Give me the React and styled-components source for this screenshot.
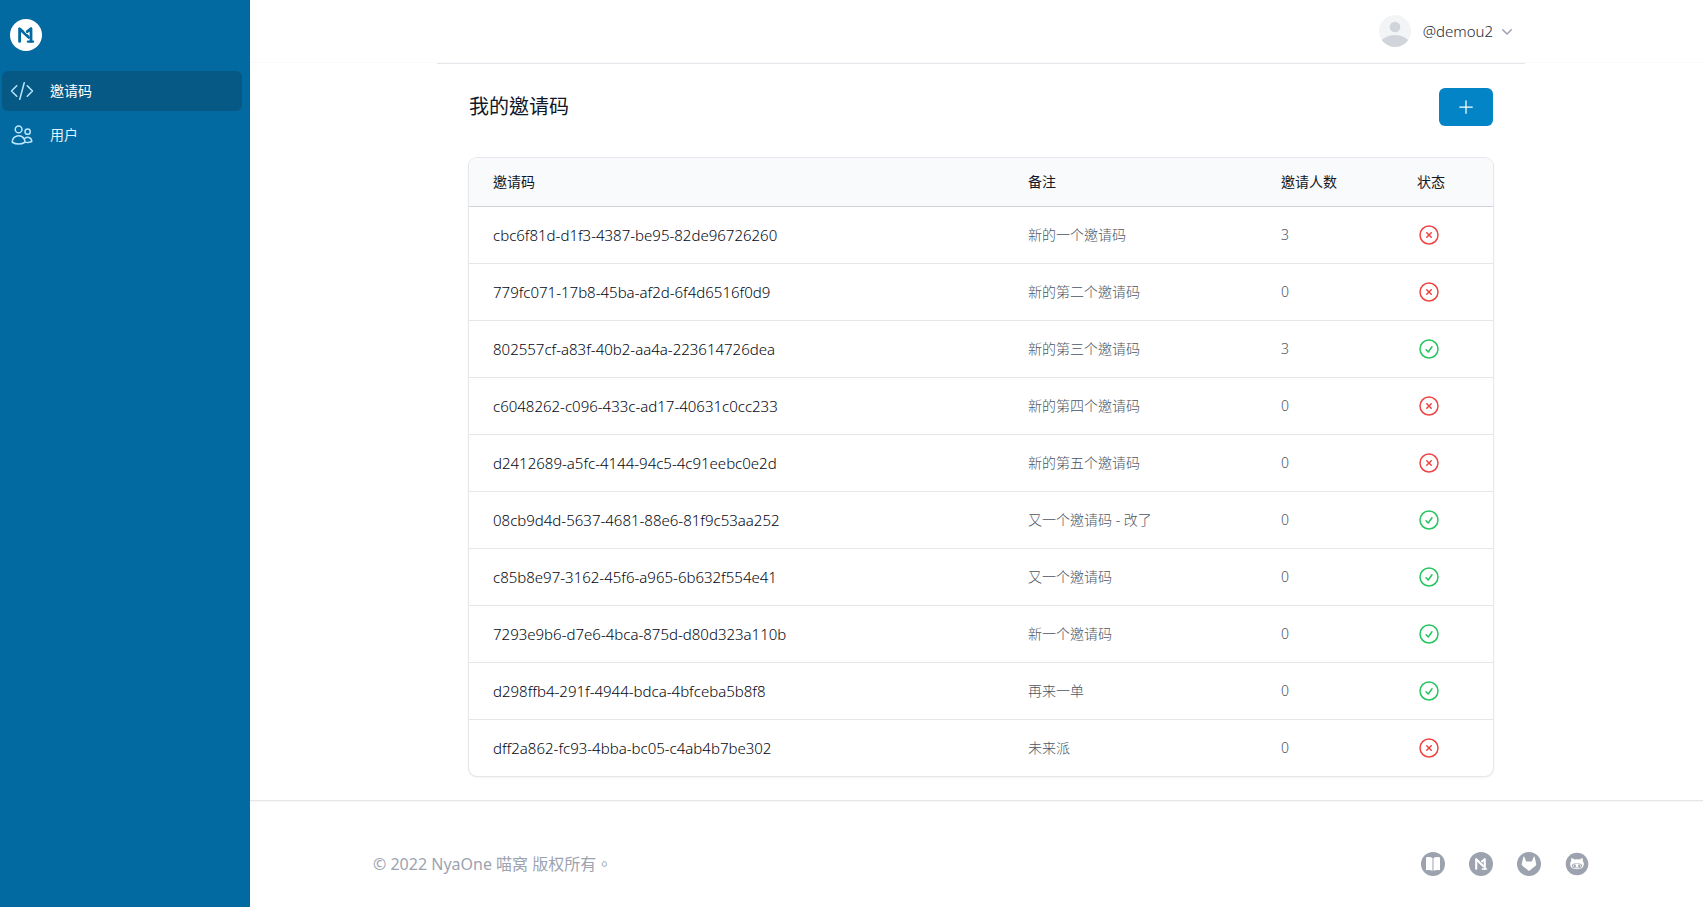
import React from "react";
import styled, { createGlobalStyle } from "styled-components";
import {
  HiOutlineCodeBracket,
  HiOutlineUsers,
  HiOutlinePlus,
  HiOutlineXCircle,
  HiOutlineCheckCircle,
  HiMiniChevronDown,
} from "react-icons/hi2";

const GlobalStyle = createGlobalStyle`
  * {
    box-sizing: border-box;
  }
  body {
    margin: 0;
    background: #ffffff;
    color: #111827;
    font-family: "Noto Sans", "Noto Sans CJK TC", "Noto Sans CJK SC", sans-serif;
    font-size: 14px;
    line-height: 20px;
  }
  button {
    font: inherit;
    cursor: pointer;
  }
`;

const Page = styled.div`
  display: flex;
  min-height: 100vh;
`;

const Sidebar = styled.aside`
  flex: 0 0 250px;
  padding: 19px 8px 16px 2px;
  background: #0369a1;
`;

const LogoLink = styled.a`
  display: block;
  width: 32px;
  height: 32px;
  margin: 0 8px 20px;
`;

const Nav = styled.nav`
  display: flex;
  flex-direction: column;
  gap: 4px;
`;

const NavLink = styled.a`
  display: flex;
  align-items: center;
  gap: 16px;
  height: 40px;
  padding: 0 8px;
  border-radius: 6px;
  background: ${(props) => (props.$active ? "#075985" : "transparent")};
  color: ${(props) => (props.$active ? "#ffffff" : "#e0f2fe")};
  text-decoration: none;

  svg {
    width: 24px;
    height: 24px;
    color: #bae6fd;
  }
`;

const Main = styled.div`
  flex: 1;
  min-width: 0;
  display: flex;
  flex-direction: column;
`;

const TopBar = styled.header`
  padding-left: 9px;
  border-bottom: 1px solid #f9fafb;
`;

const TopBarInner = styled.div`
  display: flex;
  justify-content: flex-end;
  align-items: center;
  max-width: 1088px;
  height: 62px;
  margin: 0 auto;
`;

const UserButton = styled.button`
  display: flex;
  align-items: center;
  padding: 8px;
  border: 0;
  border-radius: 6px;
  background: transparent;
  color: #1f2937;
  font-size: 15px;
  font-weight: 300;
  line-height: 20px;
`;

const Avatar = styled.span`
  width: 32px;
  height: 32px;
  margin-right: 12px;
  border-radius: 50%;
  overflow: hidden;
  background: #f3f4f6;
  color: #d1d5db;

  svg {
    display: block;
  }
`;

const Chevron = styled(HiMiniChevronDown)`
  width: 20px;
  height: 20px;
  margin-left: 4px;
  color: #9ca3af;
`;

const Content = styled.main`
  padding-left: 9px;
`;

const ContentInner = styled.div`
  max-width: 1088px;
  margin: 0 auto;
  padding: 24px 32px;
  border-top: 1px solid #e5e7eb;
`;

const Heading = styled.div`
  display: flex;
  justify-content: space-between;
  align-items: center;
  margin-bottom: 32px;
`;

const Title = styled.h1`
  margin: 0;
  font-size: 20px;
  line-height: 28px;
  font-weight: 400;
`;

const AddButton = styled.button`
  display: flex;
  align-items: center;
  padding: 8px 16px;
  border: 1px solid transparent;
  border-radius: 6px;
  background: #0284c7;
  color: #ffffff;

  svg {
    width: 20px;
    height: 20px;
  }
`;

const Card = styled.div`
  border-radius: 8px;
  overflow: hidden;
  box-shadow: 0 0 0 1px #e5e7eb, 0 1px 3px rgba(0, 0, 0, 0.1);
`;

const Table = styled.table`
  width: 100%;
  table-layout: fixed;
  border-collapse: separate;
  border-spacing: 0;
`;

const HeadCell = styled.th`
  width: ${(props) => props.$width || "auto"};
  height: 49px;
  padding: 0 12px;
  border-bottom: 1px solid #d1d5db;
  background: #f9fafb;
  font-weight: 400;
  text-align: left;

  &:first-child {
    padding-left: 24px;
  }
`;

const Cell = styled.td`
  height: 57px;
  padding: 0 12px;
  border-bottom: 1px solid #e5e7eb;
  color: ${(props) => (props.$strong ? "#030712" : "#4b5563")};
  font-size: ${(props) => (props.$strong ? "15px" : "14px")};
  font-weight: 300;

  &:first-child {
    padding-left: 24px;
  }

  tr:last-child > & {
    height: 56px;
    border-bottom: 0;
  }
`;

const Status = styled.span`
  display: flex;
  color: ${(props) => (props.$valid ? "#22c55e" : "#ef4444")};

  svg {
    width: 24px;
    height: 24px;
  }
`;

const Footer = styled.footer`
  padding-left: 9px;
  border-top: 1px solid #e5e7eb;
  box-shadow: inset 0 1px 1px rgba(0, 0, 0, 0.04);
`;

const FooterInner = styled.div`
  display: flex;
  justify-content: space-between;
  align-items: center;
  max-width: 1280px;
  margin: 0 auto;
  padding: 51px 32px 31px;
`;

const Copyright = styled.p`
  margin: 0;
  color: #9ca3af;
  font-size: 16px;
  line-height: 24px;
`;

const Social = styled.div`
  display: flex;
  gap: 24px;

  a {
    display: flex;
    color: #9ca3af;
  }
`;

const Logo = ({ size, disc, mark }) => (
  <svg width={size} height={size} viewBox="0 0 32 32" fill="none">
    <circle cx="16" cy="16" r="16" fill={disc} />
    <g strokeLinecap="round" strokeLinejoin="round">
      <path d="M9.6 22.4V9.8L19 18.6" stroke={mark} strokeWidth="2.8" />
      <path d="M16.4 13.2l4.6-3.6v12.6" stroke={disc} strokeWidth="4.4" />
      <path d="M9.6 9.8L19 18.6" stroke={mark} strokeWidth="2.2" />
      <path d="M17.2 12.6l3.8-3v12.6" stroke={mark} strokeWidth="2.8" />
      <path d="M17.8 22.6h5.4" stroke={mark} strokeWidth="2.2" />
    </g>
  </svg>
);

const BookIcon = () => (
  <svg width="24" height="24" viewBox="0 0 24 24">
    <circle cx="12" cy="12" r="12" fill="currentColor" />
    <path
      fill="#ffffff"
      d="M5 5.6c2.4-.8 4.8-.6 6.5.4v12.8c-1.8-.9-4.1-1.1-6.5-.5zM19 5.6c-2.4-.8-4.8-.6-6.5.4v12.8c1.8-.9 4.1-1.1 6.5-.5z"
    />
  </svg>
);

const FoxIcon = () => (
  <svg width="24" height="24" viewBox="0 0 24 24">
    <circle cx="12" cy="12" r="12" fill="currentColor" />
    <path
      fill="#ffffff"
      d="M6.4 4.9c.2-.5.7-.5.9 0l1.9 4.6h5.6l1.9-4.6c.2-.5.7-.5.9 0l1.6 6.8c.2.8 0 1.6-.6 2.1L12 19l-6.6-5.200c-.6-.5-.8-1.300-.6-2.100z"
    />
  </svg>
);

const CatIcon = () => (
  <svg width="24" height="24" viewBox="0 0 24 24">
    <circle cx="12" cy="12" r="11.3" fill="currentColor" />
    <path
      fill="#ffffff"
      d="M6.4 6.3c1.1 0 2.2.5 3 1.1a13 13 0 015.2 0c.8-.6 1.9-1.1 3-1.1.4.9.4 1.9.2 2.7.7.8 1 1.7 1 2.8 0 4-2.6 5.4-6.8 5.4s-6.8-1.4-6.8-5.4c0-1.1.3-2 1-2.8-.2-.8-.2-1.8.2-2.7z"
    />
    <rect x="7" y="11.4" width="10" height="4.8" rx="2.4" fill="currentColor" />
    <rect x="8" y="12" width="8" height="3.6" rx="1.8" fill="#ffffff" />
    <ellipse cx="9.8" cy="13.8" rx="1.1" ry="1.5" fill="currentColor" />
    <ellipse cx="14.2" cy="13.8" rx="1.1" ry="1.5" fill="currentColor" />
  </svg>
);

const codes = [
  { code: "cbc6f81d-d1f3-4387-be95-82de96726260", comment: "新的一个邀请码", count: 3, valid: false },
  { code: "779fc071-17b8-45ba-af2d-6f4d6516f0d9", comment: "新的第二个邀请码", count: 0, valid: false },
  { code: "802557cf-a83f-40b2-aa4a-223614726dea", comment: "新的第三个邀请码", count: 3, valid: true },
  { code: "c6048262-c096-433c-ad17-40631c0cc233", comment: "新的第四个邀请码", count: 0, valid: false },
  { code: "d2412689-a5fc-4144-94c5-4c91eebc0e2d", comment: "新的第五个邀请码", count: 0, valid: false },
  { code: "08cb9d4d-5637-4681-88e6-81f9c53aa252", comment: "又一个邀请码 - 改了", count: 0, valid: true },
  { code: "c85b8e97-3162-45f6-a965-6b632f554e41", comment: "又一个邀请码", count: 0, valid: true },
  { code: "7293e9b6-d7e6-4bca-875d-d80d323a110b", comment: "新一个邀请码", count: 0, valid: true },
  { code: "d298ffb4-291f-4944-bdca-4bfceba5b8f8", comment: "再来一单", count: 0, valid: true },
  { code: "dff2a862-fc93-4bba-bc05-c4ab4b7be302", comment: "未来派", count: 0, valid: false },
];

const App = () => (
  <>
    <GlobalStyle />
    <Page>
      <Sidebar>
        <LogoLink href="#" aria-label="NyaOne">
          <Logo size={32} disc="#ffffff" mark="#0369a1" />
        </LogoLink>
        <Nav>
          <NavLink href="#codes" $active>
            <HiOutlineCodeBracket />
            邀请码
          </NavLink>
          <NavLink href="#users">
            <HiOutlineUsers />
            用户
          </NavLink>
        </Nav>
      </Sidebar>
      <Main>
        <TopBar>
          <TopBarInner>
            <UserButton type="button">
              <Avatar>
                <svg width="32" height="32" viewBox="0 0 24 24" fill="currentColor">
                  <path d="M24 20.993V24H0v-2.996A14.977 14.977 0 0112.004 15c4.904 0 9.26 2.354 11.996 5.993zM16.002 8.999a4 4 0 11-8 0 4 4 0 018 0z" />
                </svg>
              </Avatar>
              @demou2
              <Chevron />
            </UserButton>
          </TopBarInner>
        </TopBar>
        <Content>
          <ContentInner>
            <Heading>
              <Title>我的邀请码</Title>
              <AddButton type="button" aria-label="新建邀请码">
                <HiOutlinePlus />
              </AddButton>
            </Heading>
            <Card>
              <Table>
                <thead>
                  <tr>
                    <HeadCell>邀请码</HeadCell>
                    <HeadCell $width="253px">备注</HeadCell>
                    <HeadCell $width="136px">邀请人数</HeadCell>
                    <HeadCell $width="88px">状态</HeadCell>
                  </tr>
                </thead>
                <tbody>
                  {codes.map((item) => (
                    <tr key={item.code}>
                      <Cell $strong>{item.code}</Cell>
                      <Cell>{item.comment}</Cell>
                      <Cell>{item.count}</Cell>
                      <Cell>
                        <Status $valid={item.valid}>
                          {item.valid ? <HiOutlineCheckCircle /> : <HiOutlineXCircle />}
                        </Status>
                      </Cell>
                    </tr>
                  ))}
                </tbody>
              </Table>
            </Card>
          </ContentInner>
        </Content>
        <Footer>
          <FooterInner>
            <Copyright>© 2022 NyaOne 喵窝 版权所有。</Copyright>
            <Social>
              <a href="#docs" aria-label="Docs">
                <BookIcon />
              </a>
              <a href="#home" aria-label="NyaOne">
                <Logo size={24} disc="#9ca3af" mark="#ffffff" />
              </a>
              <a href="#gitlab" aria-label="GitLab">
                <FoxIcon />
              </a>
              <a href="#github" aria-label="GitHub">
                <CatIcon />
              </a>
            </Social>
          </FooterInner>
        </Footer>
      </Main>
    </Page>
  </>
);

export default App;
